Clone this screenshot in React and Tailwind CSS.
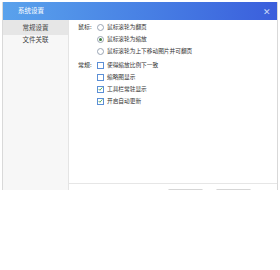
import React, { useState } from 'react';

const font = { fontFamily: '"Noto Sans CJK SC", "Liberation Sans", sans-serif' };

const Radio = ({ checked, label }) => (
  <div className="flex items-center h-[12px]">
    <span className="w-[7px] h-[7px] rounded-full border border-[#9aa5b4] bg-white flex items-center justify-center mr-[3px]">
      {checked && <span className="w-[3px] h-[3px] rounded-full bg-[#3d7a3d]" />}
    </span>
    <span className="text-[5.7px] text-[#333]">{label}</span>
  </div>
);

const Check = ({ checked, label }) => (
  <div className="flex items-center h-[12px]">
    <span className="w-[7px] h-[7px] border border-[#5b8fd6] bg-white flex items-center justify-center mr-[3px]">
      {checked && (
        <svg viewBox="0 0 8 8" className="w-[6px] h-[6px]">
          <path d="M1 4 L3 6 L7 1.5" fill="none" stroke="#3d9a3d" strokeWidth="1.3" />
        </svg>
      )}
    </span>
    <span className="text-[5.7px] text-[#333]">{label}</span>
  </div>
);

export default function App() {
  const [tab, setTab] = useState(0);
  return (
    <div className="w-[280px] h-[270px] bg-white" style={font}>
      <div className="ml-[2px] mt-[2px] w-[276px] h-[188px] border-x border-[#d9d9d9] flex flex-col overflow-hidden">
        <div className="h-[18px] flex items-center justify-between pl-[15px] pr-[6px] bg-gradient-to-r from-[#5aa2ec] to-[#3b5edc]">
          <span className="text-[6.5px] text-white">系统设置</span>
          <span className="text-[9px] text-[#c9d7f7] leading-none">✕</span>
        </div>
        <div className="flex flex-1">
          <div className="w-[66px] bg-[#f7f7f7] border-r border-[#e4e4e4] flex flex-col">
            {['常规设置', '文件关联'].map((t, i) => (
              <button
                key={t}
                onClick={() => setTab(i)}
                className={`text-[6.5px] text-[#444] text-center ${i === 0 ? 'h-[15px]' : 'h-[9px]'} ${tab === i ? 'bg-[#e6e6e6]' : ''}`}
              >
                {t}
              </button>
            ))}
          </div>
          <div className="flex-1 flex flex-col">
            <div className="flex-1 pl-[9px] pt-[1px]">
              <div className="flex">
                <span className="w-[19px] text-[6px] text-[#333] leading-[12px]">鼠标:</span>
                <div>
                  <Radio label="鼠标滚轮为翻页" />
                  <Radio checked label="鼠标滚轮为缩放" />
                  <Radio label="鼠标滚轮为上下移动图片并可翻页" />
                </div>
              </div>
              <div className="flex mt-[2px]">
                <span className="w-[19px] text-[6px] text-[#333] leading-[12px]">常规:</span>
                <div>
                  <Check label="使得缩放比例下一致" />
                  <Check label="缩略图显示" />
                  <Check checked label="工具栏常驻显示" />
                  <Check checked label="开启自动更新" />
                </div>
              </div>
            </div>
            <div className="h-[7px] border-t border-[#e6e6e6] flex gap-[13px] pl-[99px] pt-[5px]">
              <div className="w-[35px] h-[12px] border border-[#d6d6d6] rounded-[1px]" />
              <div className="w-[35px] h-[12px] border border-[#d6d6d6] rounded-[1px]" />
            </div>
          </div>
        </div>
      </div>
    </div>
  );
}
